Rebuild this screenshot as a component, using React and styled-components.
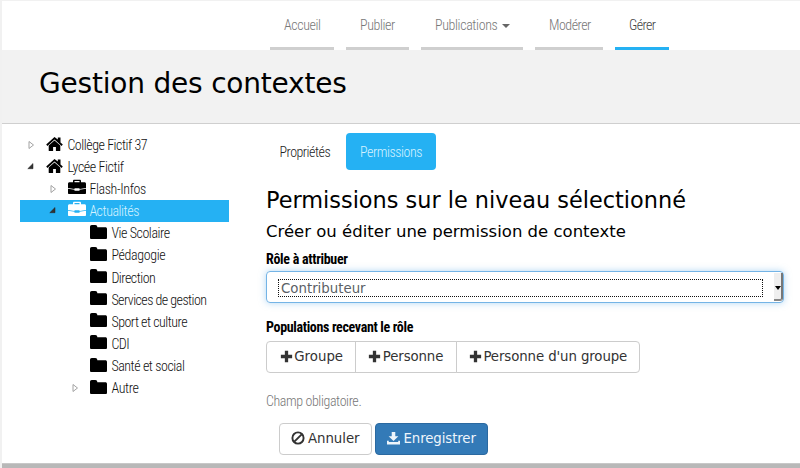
import React from 'react';
import styled, { createGlobalStyle, css } from 'styled-components';

const Global = createGlobalStyle`
  * { box-sizing: border-box; }
  body { margin: 0; background: #fff; color: #000; font: 14px/20px "DejaVu Sans", sans-serif; }
  h1, h2, h3, p { margin: 0; font-weight: 400; }
  button { font: inherit; margin: 0; }
`;

const condensed = css`
  font-family: "Roboto Condensed", Roboto, sans-serif;
  font-stretch: 75%;
  font-weight: 300;
  font-size: 14px;
  line-height: 20px;
`;

const Narrow = styled.span`
  ${condensed}
  white-space: nowrap;
  letter-spacing: ${p => p.$ls ?? -0.4}px;
  font-weight: ${p => p.$weight || 300};
`;

const Page = styled.div`
  width: 800px;
  height: 468px;
  overflow: hidden;
  display: flex;
  flex-direction: column;
  border-left: 2px solid #f1f1f1;
  border-top: 1px solid #f1f1f1;
`;
const Nav = styled.nav`
  height: 49px;
  padding-left: 268px;
  display: flex;
  gap: 12px;
`;
const NavItem = styled.a`
  height: 49px;
  width: ${p => p.$w}px;
  padding: 14px 0 0 14px;
  display: flex;
  color: ${p => (p.$active ? '#444' : '#777')};
  border-bottom: 3px solid ${p => (p.$active ? '#25b1f3' : '#cfcfcf')};
`;
const Caret = styled.i`
  width: 0;
  height: 0;
  margin: 9px 0 0 5px;
  border: 4px solid transparent;
  border-top-color: #666;
  border-bottom: 0;
`;
const Header = styled.header`
  height: 74px;
  padding: 16px 0 0 37px;
  background: #f2f2f2;
  border-bottom: 1px solid #cfcfcf;
`;
const Title = styled.h1`
  font-size: 28px;
  line-height: 36px;
  letter-spacing: -0.2px;
`;
const Body = styled.main`
  flex: 1;
  display: flex;
`;
const Tree = styled.div`
  width: 227px;
  padding: 9.6px 0 0 18px;
`;
const Row = styled.div`
  height: 22.15px;
  padding-left: ${p => p.$depth * 22}px;
  display: flex;
  align-items: center;
  color: ${p => (p.$selected ? '#d5f1ff' : '#111')};
  background: ${p => (p.$selected ? '#25b1f3' : 'transparent')};
  & > svg:nth-child(2) { color: ${p => (p.$selected ? '#fff' : '#000')}; }
`;
const Toggle = styled.svg`
  width: 8px;
  height: 10px;
  margin: 0 11px 0 7px;
  flex: none;
`;
const Glyph = styled.svg`
  width: ${p => p.$size}px;
  height: ${p => p.$size}px;
  margin-right: ${p => p.$gap}px;
  margin-bottom: ${p => p.$lift}px;
  flex: none;
  fill: currentColor;
`;
const Panel = styled.section`
  width: 518px;
  margin-left: 37px;
  padding-top: 9px;
`;
const Tabs = styled.div`
  display: flex;
  gap: 2px;
`;
const Tab = styled.a`
  height: 37px;
  width: ${p => p.$w}px;
  padding: 9px 0 0 ${p => (p.$active ? 14 : 13.5)}px;
  border-radius: 4px;
  color: ${p => (p.$active ? '#d5f1ff' : '#222')};
  background: ${p => (p.$active ? '#25b1f3' : 'transparent')};
`;
const Heading = styled.h2`
  margin-top: 15px;
  font-size: 22.4px;
  line-height: 30px;
  white-space: nowrap;
`;
const SubHeading = styled.h3`
  margin-top: 5px;
  font-size: 16.5px;
  line-height: 24px;
`;
const Label = styled.div`
  height: 20px;
  margin-top: ${p => p.$top}px;
`;
const Select = styled.div`
  height: 32px;
  margin-top: 2px;
  padding: 7px 0 0 11px;
  display: flex;
  border: 1px solid #74b4e6;
  border-radius: 4px;
  box-shadow: 0 0 7px rgba(102, 175, 233, .5);
  color: #5b5f66;
`;
const Value = styled.div`
  width: 486px;
  height: 18px;
  padding-left: 2px;
  font-size: 13.33px;
  line-height: 18px;
  border: 1px dotted #111;
`;
const Arrow = styled.div`
  width: 9px;
  height: 28px;
  margin: -6px 0 0 11px;
  display: flex;
  align-items: center;
  justify-content: center;
  background: #efefef;
  border-right: 2px solid #777;
  border-bottom: 2px solid #888;
  border-radius: 0 0 3px 0;
  &::after {
    content: "";
    margin-top: 3px;
    border: 3px solid transparent;
    border-top: 4px solid #000;
    border-bottom: 0;
  }
`;
const Group = styled.div`
  display: flex;
  margin-top: 4px;
  button { border-radius: 0; }
  button + button { margin-left: -1px; }
  button:first-child { border-radius: 4px 0 0 4px; }
  button:last-child { border-radius: 0 4px 4px 0; }
`;
const Button = styled.button`
  width: ${p => p.$w}px;
  height: 32px;
  padding: 0 0 0 ${p => p.$pl}px;
  display: flex;
  align-items: center;
  white-space: nowrap;
  font-size: 13.33px;
  letter-spacing: ${p => p.$ls || 0}px;
  border-radius: 4px;
  border: 1px solid ${p => (p.$primary ? '#2b69a0' : '#ccc')};
  color: ${p => (p.$primary ? '#eef5fb' : '#333')};
  background: ${p => (p.$primary ? '#337ab7' : '#fff')};
`;
const Hint = styled.p`
  margin-top: 18px;
  height: 20px;
  color: #777;
`;
const Actions = styled.div`
  display: flex;
  gap: 3px;
  margin: 12px 0 0 13px;
`;
const Footer = styled.footer`
  height: 5px;
  background: linear-gradient(#c8c8c8 0 1px, #b8b8b8 1px);
`;

const shapes = {
  home: (
    <>
      <path d="M8.5 1 0.200 8.500l1.200 1.400 7.100-6.300 7.100 6.300 1.200-1.400-2.300-2.100V1.600h-2.700v1.900Z" />
      <path d="M8.5 4.400 2.700 9.500V14.400c0 .5.200.7.700.7h3.700v-4.200h2.800v4.200h3.700c.5 0 .7-.2.700-.7V9.500Z" />
    </>
  ),
  briefcase: (
    <path fillRule="evenodd" d="M5 3.200V2.100C5 1.200 5.500.7 6.400.7h5.200c.9 0 1.400.5 1.400 1.400v1.100h3.500c.9 0 1.500.6 1.500 1.500v4.300l-6.500 1V9.200H6.500V10L0 9V4.700c0-.9.600-1.500 1.500-1.500Zm1.500 0h5V2h-5ZM0 9.700l6.500 1v1.100h5v-1.100l6.500-1V14c0 .7-.4 1.100-1.100 1.100H1.100C.4 15.100 0 14.700 0 14Z" />
  ),
  folder: <path d="M0 3C0 1.700.6 1 1.800 1h3.400C6.600 1 7.300 1.700 7.300 3v.2h7.900c1.200 0 1.800.6 1.800 1.800v8.500c0 1-.5 1.500-1.500 1.500h-14C.5 15 0 14.500 0 13.500Z" />,
  plus: <path d="M5.600 1h3.800v4.600H14v3.800H9.400V14H5.600V9.400H1V5.600h4.600Z" />,
  ban: (
    <g fill="none" stroke="currentColor" strokeWidth="2.2">
      <circle cx="8" cy="8" r="6.400" />
      <path d="M12.500 3.500 3.500 12.500" />
    </g>
  ),
  save: <path d="M5.800 0h4.400v5.200H14L8 11.200 2 5.200h3.800ZM0 10.800h2.200v1.400h11.600v-1.400H16V15.500H0Z" />,
};
const Icon = ({ name, size, gap = 0, box = 16, lift = 0 }) => (
  <Glyph $size={size} $gap={gap} $lift={lift} viewBox={`0 0 ${box} ${box}`}>{shapes[name]}</Glyph>
);
const Arrowhead = ({ state }) => (
  <Toggle viewBox="0 0 8 10">
    {state === 'closed' && <path d="M2 1.500v7L6.500 5Z" fill="#fff" stroke="#999" strokeWidth=".9" />}
    {state === 'open' && <path d="M6 1.500v5.200H.8Z" fill="#333" stroke="#222" strokeWidth=".5" />}
  </Toggle>
);

const rows = [
  [0, 'closed', 'home', 'Collège Fictif 37', -0.47],
  [0, 'open', 'home', 'Lycée Fictif', -0.42],
  [1, 'closed', 'briefcase', 'Flash-Infos', -0.37],
  [1, 'open', 'briefcase', 'Actualités', -0.45, true],
  [2, '', 'folder', 'Vie Scolaire', -0.44],
  [2, '', 'folder', 'Pédagogie', -0.35],
  [2, '', 'folder', 'Direction', -0.5],
  [2, '', 'folder', 'Services de gestion', -0.55],
  [2, '', 'folder', 'Sport et culture', -0.5],
  [2, '', 'folder', 'CDI', -0.5],
  [2, '', 'folder', 'Santé et social', -0.45],
  [2, 'closed', 'folder', 'Autre', -0.35],
];

export default function App() {
  return (
    <Page>
      <Global />
      <Nav>
        <NavItem $w={64}><Narrow>Accueil</Narrow></NavItem>
        <NavItem $w={63}><Narrow>Publier</Narrow></NavItem>
        <NavItem $w={102}><Narrow $ls={-0.37}>Publications</Narrow><Caret /></NavItem>
        <NavItem $w={68}><Narrow $ls={-0.5}>Modérer</Narrow></NavItem>
        <NavItem $w={54} $active><Narrow $ls={-0.6}>Gérer</Narrow></NavItem>
      </Nav>
      <Header><Title>Gestion des contextes</Title></Header>
      <Body>
        <Tree>
          {rows.map(([depth, state, icon, text, ls, selected]) => (
            <Row key={text} $depth={depth} $selected={selected}>
              <Arrowhead state={state} />
              <Icon
                name={icon}
                size={icon === 'briefcase' ? 18 : 17}
                box={icon === 'briefcase' ? 18 : 17}
                gap={icon === 'briefcase' ? 3.4 : 4.4}
                lift={icon === 'home' ? 1 : 2}
              />
              <Narrow $ls={ls}>{text}</Narrow>
            </Row>
          ))}
        </Tree>
        <Panel>
          <Tabs>
            <Tab $w={78}><Narrow $ls={-0.5}>Propriétés</Narrow></Tab>
            <Tab $w={90} $active><Narrow $ls={-0.45}>Permissions</Narrow></Tab>
          </Tabs>
          <Heading>Permissions sur le niveau sélectionné</Heading>
          <SubHeading>Créer ou éditer une permission de contexte</SubHeading>
          <Label $top={5}><Narrow $ls={-0.3} $weight={700}>Rôle à attribuer</Narrow></Label>
          <Select><Value>Contributeur</Value><Arrow /></Select>
          <Label $top={14}><Narrow $ls={-0.34} $weight={700}>Populations recevant le rôle</Narrow></Label>
          <Group>
            <Button $w={89.5} $pl={12.5} $ls={0.02}><Icon name="plus" size={13} box={15} gap={1.7} lift={1} />Groupe</Button>
            <Button $w={102} $pl={12.5} $ls={-0.1}><Icon name="plus" size={13} box={15} gap={1.7} lift={1} />Personne</Button>
            <Button $w={184.5} $pl={12.2} $ls={-0.1}><Icon name="plus" size={13} box={15} gap={1.7} lift={1} />Personne d'un groupe</Button>
          </Group>
          <Hint><Narrow>Champ obligatoire.</Narrow></Hint>
          <Actions>
            <Button $w={93} $pl={11} $ls={-0.05}><Icon name="ban" size={14} gap={3} lift={2} />Annuler</Button>
            <Button $w={113} $pl={11} $ls={-0.1} $primary><Icon name="save" size={13} gap={3.5} lift={2} />Enregistrer</Button>
          </Actions>
        </Panel>
      </Body>
      <Footer />
    </Page>
  );
}
